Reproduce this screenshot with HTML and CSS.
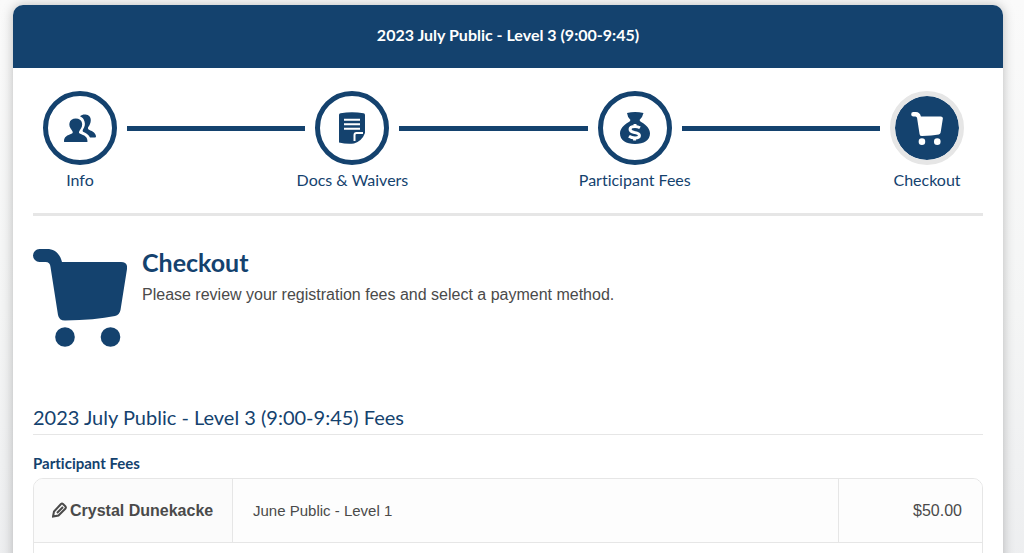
FILE: index.html
```html
<!DOCTYPE html>
<html lang="en">
<head>
  <meta charset="UTF-8" />
  <meta name="viewport" content="width=device-width, initial-scale=1.0"/>
  <title>Checkout</title>
  <link rel="stylesheet" href="styles.css">
</head>
<body>

  <!-- shared cart icon -->
  <svg class="sprite" aria-hidden="true">
    <symbol id="cart" viewBox="0 0 94 98">
      <path d="M6.5 0H14C22 0 27 5 29 13H88Q95 13 94 20L87.500 61Q86.500 66 82 67Q62 71 32 71.500Q26 71.500 25 66L17.500 18Q17 13 12.500 13H6.500A6.500 6.500 0 0 1 6.500 0Z"/>
      <circle cx="32" cy="88" r="9.800"/>
      <circle cx="77.500" cy="88" r="9.800"/>
    </symbol>
  </svg>

  <main class="card">
    <header class="card-header">
      <h1>2023 July Public - Level 3 (9:00-9:45)</h1>
    </header>

    <div class="card-body">
      <div class="steps">
        <div class="step">
          <div class="step-circle">
            <svg width="34" height="28" viewBox="0 0 34 28">
              <path d="M1 27.500C1 22.500 4 21.500 9 19.500C10 19 10 18 9 16.500C6.500 13.500 6 11 6.500 9C7 6 9.500 4.500 12.800 4.500S18.500 6 19 9C19.500 11 19 13.500 16.700 16.500C15.700 18 15.700 19 16.700 19.500C21.500 21.500 24.500 22.500 24.500 27.500Q24.500 28 23.500 28H2Q1 28 1 27.500Z"/>
              <path d="M17 2.200C18.500 0.800 20.500 0.300 22.500 0.500C26 0.800 27.800 3 27.800 6C27.800 9 26.500 11.500 25.300 13C24.500 14.200 25 15.200 26 15.700C30 17.300 33 19.500 33 22.500Q33 23.500 32 23.500H27C25.500 20.500 23 19 20 17.700Q19.200 17 20 15.500C22 12.500 22.300 10 21.500 7.500C20.800 5 19.500 3.200 17 2.200Z"/>
            </svg>
          </div>
          <span class="step-label">Info</span>
        </div>
        <div class="step-line line-1"></div>
        <div class="step">
          <div class="step-circle">
            <svg width="28" height="32" viewBox="0 0 28 32">
              <path d="M1 3Q1 1.500 2.500 1.300Q14-1 25.500 1.300Q27 1.500 27 3V21Q24 29 16 31.500Q9 32.500 1 30.500Z"/>
              <path class="cut" d="M6 7.700H22M6 12.300H22M6 16.800H22M16.500 29V23Q16.500 21 18.500 21H25"/>
            </svg>
          </div>
          <span class="step-label">Docs &amp; Waivers</span>
        </div>
        <div class="step-line line-2"></div>
        <div class="step">
          <div class="step-circle">
            <svg width="30" height="32" viewBox="0 0 30 32">
              <path d="M7 1Q15-1 23.500 1Q22.500 5.500 19.500 8Q20 9.500 22 10.500C26.500 13 30 17 30 21.500C30 28 24 32 15 32S0 28 0 21.500C0 17 3.500 13 8 10.500Q10 9.500 10.500 8Q7.500 5.500 7 1Z"/>
              <path class="cut dollar" d="M20 15.800Q17.800 14.500 15 14.500C8.500 14.500 8.500 19.500 14.500 20.500C21.500 21.500 20.500 26 15 26Q11.500 26 9 24.300M15 12V14.500M14.600 26V28.500"/>
            </svg>
          </div>
          <span class="step-label">Participant Fees</span>
        </div>
        <div class="step-line line-3"></div>
        <div class="step active">
          <div class="step-circle">
            <svg width="32" height="33"><use href="#cart"/></svg>
          </div>
          <span class="step-label">Checkout</span>
        </div>
      </div>

      <section class="intro">
        <svg class="intro-icon" width="94" height="98"><use href="#cart"/></svg>
        <div>
          <h2>Checkout</h2>
          <p>Please review your registration fees and select a payment method.</p>
        </div>
      </section>

      <section class="fees">
        <h3>2023 July Public - Level 3 (9:00-9:45) Fees</h3>
        <h4 id="fees-title">Participant Fees</h4>
        <table class="fee-table" aria-labelledby="fees-title">
          <tbody>
            <tr class="fee-row">
              <th class="fee-name" scope="row">
                <svg width="15" height="16" viewBox="0 0 15 16">
                  <path d="M1 14.500L2 9.500L9 2Q10 1 11 2L13.500 4.500Q14.300 5.500 13.500 6.500L6.500 13.500ZM5 11L11 5"/>
                </svg>Crystal Dunekacke
              </th>
              <td class="fee-program">June Public - Level 1</td>
              <td class="fee-price">$50.00</td>
            </tr>
            <tr class="fee-footer">
              <td colspan="3"></td>
            </tr>
          </tbody>
        </table>
      </section>
    </div>
  </main>

</body>
</html>
```
FILE: styles.css
```css
* {
  box-sizing: border-box;
  margin: 0;
  padding: 0;
}

html {
  scrollbar-width: none;
}

body {
  font-family: "Liberation Sans", Arial, sans-serif;
  font-size: 16px;
  color: #4a4a4a;
  background: linear-gradient(180deg, #fafafa, #f4f5f5 50%, #ecedef);
  padding: 5px 21px 0 13px;
}

.sprite {
  position: absolute;
  width: 0;
  height: 0;
}

.card {
  background: #fff;
  border-radius: 10px;
  box-shadow: 0 0 12px rgba(0, 0, 0, 0.25);
  overflow: hidden;
}

.card-header {
  background: #14426e;
  color: #fff;
  height: 63px;
  padding-bottom: 3px;
  display: flex;
  justify-content: center;
  align-items: center;
}

h1,
h2,
h3,
h4,
.step-label {
  font-family: Lato, sans-serif;
  font-variant-ligatures: none;
}

h1 {
  font-size: 16px;
  line-height: 20px;
  font-weight: bold;
}

.card-body {
  padding: 23px 20px 20px;
}

/* progress steps */
.steps {
  display: flex;
  align-items: flex-start;
  padding: 0 19px 23px 10px;
  border-bottom: 3px solid #e6e6e6;
}

.step {
  flex: none;
  width: 74px;
  display: flex;
  flex-direction: column;
  align-items: center;
  gap: 5px;
  color: #14426e;
}

.step-circle {
  width: 74px;
  height: 74px;
  border: 5px solid #14426e;
  border-radius: 50%;
  display: flex;
  justify-content: center;
  align-items: center;
}

.step-circle svg {
  fill: #14426e;
}

.step-circle .cut {
  fill: none;
  stroke: #fff;
  stroke-width: 2;
}

.step-circle .dollar {
  stroke-width: 3;
}

.step.active .step-circle {
  background: #14426e;
  border-color: #e6e6e6;
  background-clip: padding-box;
}

.step.active svg {
  fill: #fff;
}

.step-label {
  font-size: 16px;
  line-height: 20px;
  white-space: nowrap;
}

.step-line {
  height: 5px;
  margin: 35px 10px 0;
  background: #14426e;
}

.line-1 {
  flex: 18;
}

.line-2 {
  flex: 19;
}

.line-3 {
  flex: 20;
}

/* intro */
.intro {
  display: flex;
  align-items: flex-start;
  gap: 15px;
  padding: 33px 0 57px;
}

.intro-icon {
  flex: none;
  fill: #14426e;
}

h2 {
  font-size: 25px;
  line-height: 27px;
  color: #14426e;
}

.intro p {
  line-height: 20px;
  margin-top: 9px;
}

/* fees */
h3 {
  font-size: 20px;
  line-height: 27px;
  font-weight: normal;
  color: #14426e;
  padding-bottom: 3px;
  border-bottom: 1px solid #e6e6e6;
}

h4 {
  font-size: 15px;
  line-height: 20px;
  color: #14426e;
  margin: 18px 0 5px;
}

.fee-table {
  width: 100%;
  table-layout: fixed;
  border: 1px solid #e6e6e6;
  border-radius: 10px;
  border-spacing: 0;
  overflow: hidden;
}

.fee-row th,
.fee-row td {
  height: 64px;
  padding: 0 20px;
  background: #fdfdfd;
  border-bottom: 1px solid #e6e6e6;
}

.fee-row .fee-name {
  width: 199px;
  padding: 0 0 0 18px;
  text-align: left;
  white-space: nowrap;
  background: #fbfbfb;
  border-right: 1px solid #e6e6e6;
}

.fee-name svg {
  vertical-align: -2px;
  margin-right: 3px;
  fill: none;
  stroke: #4a4a4a;
  stroke-width: 2;
}

.fee-row .fee-program {
  font-size: 15px;
  border-right: 1px solid #e6e6e6;
}

.fee-price {
  width: 143px;
  text-align: right;
}

.fee-footer td {
  height: 50px;
}
```
